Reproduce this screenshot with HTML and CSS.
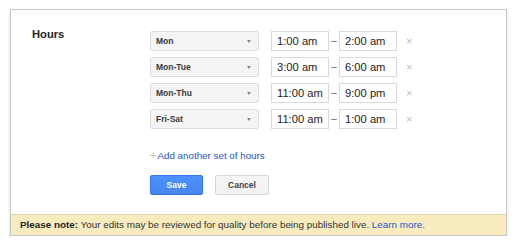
FILE: index.html
```html
<!DOCTYPE html>
<html>
<head>
  <title>Edit hours</title>
  <link rel="stylesheet" href="styles.css">
</head>
<body>
  <div class="dialog">
    <div class="dialogBody">
      <div class="fieldLabel">Hours</div>
      <div class="hours">
        <div class="hoursRow">
          <div class="daySelect"><span>Mon</span><span class="arrow"></span></div>
          <div class="timeBox">1:00 am</div>
          <span class="dash">&ndash;</span>
          <div class="timeBox">2:00 am</div>
          <span class="remove">&times;</span>
        </div>
        <div class="hoursRow">
          <div class="daySelect"><span>Mon-Tue</span><span class="arrow"></span></div>
          <div class="timeBox">3:00 am</div>
          <span class="dash">&ndash;</span>
          <div class="timeBox">6:00 am</div>
          <span class="remove">&times;</span>
        </div>
        <div class="hoursRow">
          <div class="daySelect"><span>Mon-Thu</span><span class="arrow"></span></div>
          <div class="timeBox">11:00 am</div>
          <span class="dash">&ndash;</span>
          <div class="timeBox">9:00 pm</div>
          <span class="remove">&times;</span>
        </div>
        <div class="hoursRow">
          <div class="daySelect"><span>Fri-Sat</span><span class="arrow"></span></div>
          <div class="timeBox">11:00 am</div>
          <span class="dash">&ndash;</span>
          <div class="timeBox">1:00 am</div>
          <span class="remove">&times;</span>
        </div>

        <a class="addHours"><span class="plus">+</span>Add another set of hours</a>

        <div class="buttons">
          <button class="buttonSave">Save</button>
          <button class="buttonCancel">Cancel</button>
        </div>
      </div>
    </div>
    <div class="note">
      <b>Please note:</b> Your edits may be reviewed for quality before being published live. <a>Learn more.</a>
    </div>
  </div>
</body>
</html>
```

FILE: styles.css
```css
* {
  margin: 0;
  box-sizing: border-box;
  font-family: "Liberation Sans", Arial, Helvetica, sans-serif;
}

body {
  background-color: #fff;
  color: #222;
}

.dialog {
  width: 497px;
  height: 227px;
  margin: 9px 0 0 10px;
  border: 1px solid #c8c8c8;
  box-shadow: 0 2px 4px rgba(0, 0, 0, 0.12);
  display: flex;
  flex-direction: column;
  background-color: #fff;
}

.dialogBody {
  flex: 1;
  display: grid;
  grid-template-columns: 118px 1fr;
  padding: 21px 0 0 21px;
}

.fieldLabel {
  font-size: 11.2px;
  font-weight: bold;
  color: #222;
  line-height: 11px;
  margin-top: -2px;
}

.hours {
  display: flex;
  flex-direction: column;
  gap: 6px;
}

.hoursRow {
  display: flex;
  align-items: center;
  height: 20px;
}

.daySelect {
  width: 109px;
  height: 20px;
  display: flex;
  align-items: center;
  justify-content: space-between;
  padding: 0 5px 0 5px;
  background-color: #f4f4f4;
  border: 1px solid #dedede;
  border-radius: 2px;
  font-size: 8.5px;
  font-weight: bold;
  color: #3a3a3a;
}

.arrow {
  width: 0;
  height: 0;
  border-left: 2.5px solid transparent;
  border-right: 2.5px solid transparent;
  border-top: 3px solid #888;
  margin-right: 2px;
}

.timeBox {
  width: 58px;
  height: 20px;
  padding: 0 5px;
  border: 1px solid #d9d9d9;
  display: flex;
  align-items: center;
  font-size: 11.2px;
  color: #222;
  background-color: #fff;
}

.daySelect + .timeBox {
  margin-left: 12px;
}

.dash {
  width: 10px;
  text-align: center;
  font-size: 10px;
  color: #666;
  margin-top: -2px;
}

.remove {
  margin-left: 9px;
  font-size: 11px;
  color: #bbb;
}

/* link and buttons */
.addHours {
  margin-top: 14px;
  font-size: 9.8px;
  color: #2255cc;
  cursor: pointer;
}

.plus {
  color: #bbb;
  font-size: 11px;
  margin-right: 1px;
}

.buttons {
  display: flex;
  gap: 12px;
  margin-top: 8px;
}

button {
  height: 20px;
  font-size: 8.5px;
  font-weight: bold;
  border-radius: 2px;
  cursor: pointer;
}

.buttonSave {
  width: 53px;
  color: #fff;
  background: linear-gradient(#4d90fe, #4787ed);
  border: 1px solid #3079ed;
}

.buttonCancel {
  width: 54px;
  color: #444;
  background: linear-gradient(#f5f5f5, #f1f1f1);
  border: 1px solid #d8d8d8;
}

/* note bar */
.note {
  height: 21px;
  padding: 0 9px;
  line-height: 20px;
  background-color: #f8ecbf;
  border-top: 1px solid #dcd3b0;
  font-size: 9.85px;
  color: #333;
}

.note b {
  color: #222;
}

.note a {
  color: #2255cc;
  cursor: pointer;
}
```
